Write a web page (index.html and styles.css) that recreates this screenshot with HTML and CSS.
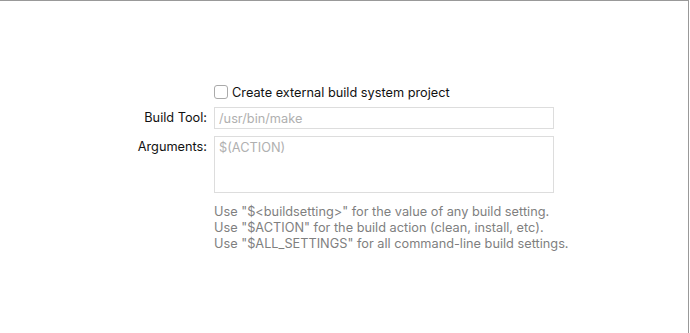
FILE: index.html
```html
<!DOCTYPE html>
<html lang="en">
<head>
  <meta charset="UTF-8">
  <title>External Build System</title>
  <link rel="stylesheet" href="styles.css">
</head>
<body>
  <div class="panel">
    <div class="form">
      <!-- Casilla: proyecto externo -->
      <div class="label"></div>
      <label class="check-row">
        <span class="checkbox"></span>
        <span>Create external build system project</span>
      </label>

      <div class="label field-label">Build Tool:</div>
      <div class="input">/usr/bin/make</div>

      <div class="label field-label">Arguments:</div>
      <div class="textarea">$(ACTION)</div>

      <div class="label"></div>
      <div class="help">
        <div>Use "$&lt;buildsetting&gt;" for the value of any build setting.</div>
        <div>Use "$ACTION" for the build action (clean, install, etc).</div>
        <div>Use "$ALL_SETTINGS" for all command-line build settings.</div>
      </div>
    </div>
  </div>
</body>
</html>
```

FILE: styles.css
```css
body, html {
  margin: 0;
  height: 100%;
  background: #fff;
  font-family: Inter, "Noto Sans", sans-serif;
  font-size: 12.75px;
  color: #111;
}

.panel {
  box-sizing: border-box;
  width: 689px;
  height: 333px;
  border-top: 1px solid #999;
  border-right: 1px solid #999;
  padding-top: 82px;
}

.form {
  display: grid;
  grid-template-columns: 207px 340px;
  column-gap: 7px;
  align-items: start;
}

.label {
  text-align: right;
}

.field-label {
  padding-top: 3px;
}

.check-row {
  display: flex;
  align-items: center;
  gap: 4px;
  height: 18px;
  margin-bottom: 6px;
}

.checkbox {
  box-sizing: border-box;
  width: 14px;
  height: 14px;
  border: 1px solid #aaa;
  border-radius: 3px;
  background: #fff;
}

.input, .textarea {
  box-sizing: border-box;
  border: 1px solid #ddd;
  color: #b0b0b0;
  padding: 3px 4px;
}

.input {
  height: 22px;
  margin-bottom: 7px;
}

.textarea {
  height: 57px;
}

.help {
  margin-top: 11px;
  color: #7f7f7f;
  line-height: 16px;
  white-space: nowrap;
}
```
